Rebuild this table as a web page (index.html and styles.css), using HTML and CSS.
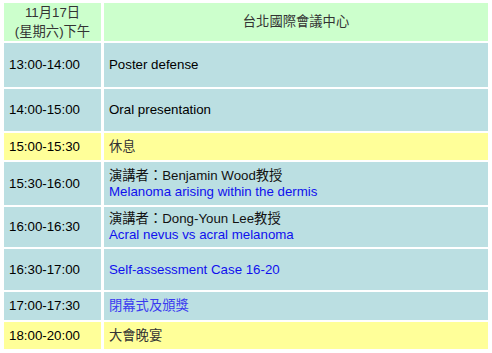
FILE: index.html
```html
<!DOCTYPE html>
<html lang="zh-Hant">
<head>
<meta charset="utf-8">
<title>11月17日 議程</title>
<link rel="stylesheet" href="styles.css">
</head>
<body>
<div class="schedule">
  <div class="cell head date">11月17日<br>(星期六)下午</div>
  <div class="cell head venue">台北國際會議中心</div>

  <div class="cell blue">13:00-14:00</div>
  <div class="cell blue">Poster defense</div>

  <div class="cell blue">14:00-15:00</div>
  <div class="cell blue">Oral presentation</div>

  <div class="cell yellow">15:00-15:30</div>
  <div class="cell yellow cjk">休息</div>

  <div class="cell blue">15:30-16:00</div>
  <div class="cell blue talk"><span class="speaker">演講者：Benjamin Wood教授</span><span class="link">Melanoma arising within the dermis</span></div>

  <div class="cell blue">16:00-16:30</div>
  <div class="cell blue talk"><span class="speaker">演講者：Dong-Youn Lee教授</span><span class="link">Acral nevus vs acral melanoma</span></div>

  <div class="cell blue">16:30-17:00</div>
  <div class="cell blue link">Self-assessment Case 16-20</div>

  <div class="cell blue">17:00-17:30</div>
  <div class="cell blue link2">閉幕式及頒獎</div>

  <div class="cell yellow">18:00-20:00</div>
  <div class="cell yellow cjk">大會晚宴</div>
</div>
</body>
</html>
```

FILE: styles.css
```css
html, body {
  margin: 0;
  padding: 0;
  background: #ffffff;
}
body {
  font-family: "Liberation Sans", Arial, "Noto Sans CJK TC", sans-serif;
  font-size: 13.3px;
  line-height: 16px;
  color: #000;
}
.schedule {
  display: grid;
  grid-template-columns: 97px 384px;
  grid-template-rows: 38px 44px 42px 27px 43px 40px 41px 28px 27px;
  gap: 2px 3px;
  margin: 3px 4px;
}
.cell {
  display: flex;
  flex-direction: column;
  justify-content: center;
  padding: 0 5px;
}
.head {
  background: #ccffcc;
  color: #333;
  align-items: center;
  text-align: center;
}
.date { line-height: 19px; }
.blue { background: #bbdfe2; }
.yellow { background: #ffff99; }
.cjk { color: #333; }
.speaker { color: #111; }
.link { color: #1010ee; }
.link2 { color: #3a3af0; }
```
